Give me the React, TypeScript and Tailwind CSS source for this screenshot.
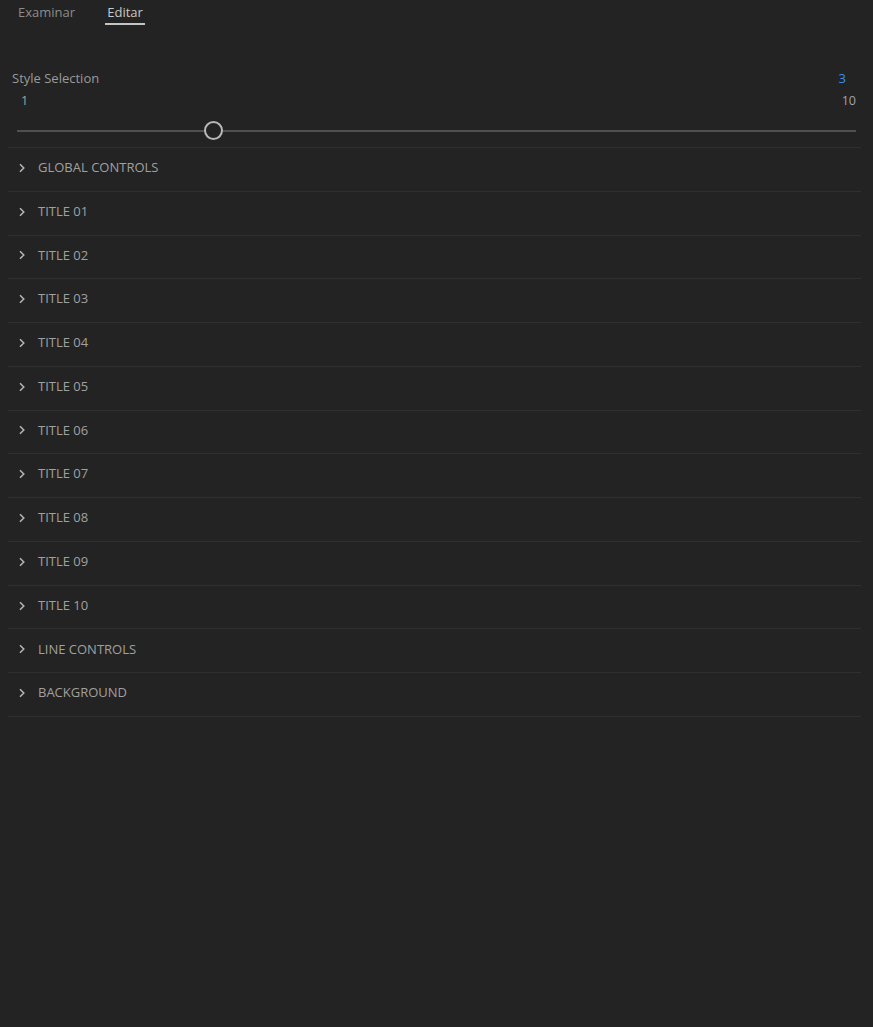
import React from "react";

const rows = [
  "GLOBAL CONTROLS",
  "TITLE 01",
  "TITLE 02",
  "TITLE 03",
  "TITLE 04",
  "TITLE 05",
  "TITLE 06",
  "TITLE 07",
  "TITLE 08",
  "TITLE 09",
  "TITLE 10",
  "LINE CONTROLS",
  "BACKGROUND",
];

function Chevron() {
  return (
    <svg width="8" height="10" viewBox="0 0 8 10" className="shrink-0">
      <path d="M2 1.2 L5.8 5 L2 8.8" fill="none" stroke="#b8b8b8" strokeWidth="1.5" />
    </svg>
  );
}

export default function App() {
  return (
    <div
      className="w-[873px] h-[1027px] bg-[#232323] text-[#a3a3a3] overflow-hidden"
      style={{ fontFamily: '"Open Sans", "Noto Sans", sans-serif' }}
    >
      <div className="flex items-start gap-[30px] pl-[18px] h-[30px] pt-[3px] text-[13px]">
        <div className="text-[#8c8c8c]">Examinar</div>
        <div className="flex flex-col items-center">
          <span className="text-[#c8c8c8]">Editar</span>
          <div className="w-[40px] h-[2px] bg-[#c4c4c4] mt-[0px]" />
        </div>
      </div>
      <div className="pt-[39px] px-[12px] pr-[17px]">
        <div className="flex justify-between text-[13px] leading-[18px]">
          <span className="text-[#9a9a9a]">Style Selection</span>
          <span className="text-[#3d8ee6] pr-[10px]">3</span>
        </div>
        <div className="flex justify-between text-[12.5px] leading-[18px] mt-[5px] pl-[9px]">
          <span>1</span>
          <span>10</span>
        </div>
        <div className="relative h-[26px] ml-[5px] mt-[8px]">
          <div className="absolute left-0 right-0 top-[12px] h-[2px] bg-[#505050]" />
          <div className="absolute left-[187px] top-[3px] w-[19px] h-[19px] rounded-full border-2 border-[#b8b8b8] bg-[#232323]" />
        </div>
      </div>
      <div className="ml-[8px] mr-[12px] mt-[3px]">
        {rows.map((r) => (
          <div
            key={r}
            className="h-[43.77px] border-t border-[#2f2f2f] flex items-center pl-[10px] pb-[3px] gap-[12px] text-[13px] text-[#a0a0a0]"
          >
            <Chevron />
            <span>{r}</span>
          </div>
        ))}
        <div className="border-t border-[#2f2f2f]" />
      </div>
    </div>
  );
}
